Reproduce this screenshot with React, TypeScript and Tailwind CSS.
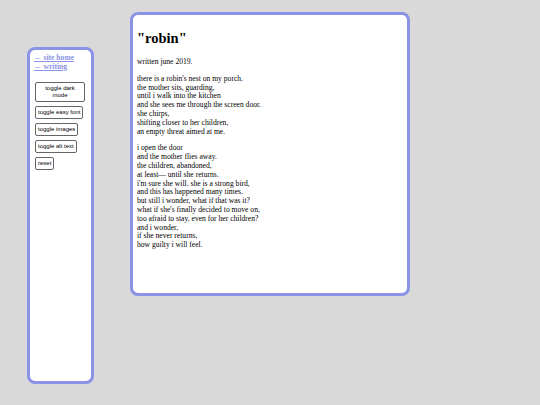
import React from "react";

const stanza1 = [
  "there is a robin's nest on my porch.",
  "the mother sits, guarding,",
  "until i walk into the kitchen",
  "and she sees me through the screen door.",
  "she chirps,",
  "shifting closer to her children,",
  "an empty threat aimed at me.",
];
const stanza2 = [
  "i open the door",
  "and the mother flies away.",
  "the children, abandoned,",
  "at least\u2014 until she returns.",
  "i'm sure she will. she is a strong bird,",
  "and this has happened many times.",
  "but still i wonder, what if that was it?",
  "what if she's finally decided to move on,",
  "too afraid to stay, even for her children?",
  "and i wonder,",
  "if she never returns,",
  "how guilty i will feel.",
];

export default function App() {
  return (
    <div
      className="min-h-[405px] w-[540px] bg-[#d9d9d9] flex items-start pl-[27px]"
      style={{ fontFamily: '"Liberation Serif", serif' }}
    >
      <aside className="mt-[47px] w-[67px] h-[337px] bg-white border-[3px] border-[#8a93e6] rounded-[8px] px-[4px] pt-[3px]">
        <div className="flex flex-col items-start text-[7.6px] leading-[9px] font-bold text-[#8a93e6]">
          <a className="underline">← site home</a>
          <a className="underline">← writing</a>
        </div>
        <div
          className="flex flex-col items-start gap-[4px] mt-[11px] pl-[1px]"
          style={{ fontFamily: '"Liberation Sans", sans-serif' }}
        >
          <button className="w-[50px] h-[20px] border border-[#666] rounded-[2px] bg-white text-[6px] leading-[7px] text-black px-[2px]">
            toggle dark mode
          </button>
          <button className="h-[13px] border border-[#666] rounded-[2px] bg-white text-[6px] leading-[7px] text-black px-[2px]">
            toggle easy font
          </button>
          <button className="h-[13px] border border-[#666] rounded-[2px] bg-white text-[6px] leading-[7px] text-black px-[2px]">
            toggle images
          </button>
          <button className="h-[13px] border border-[#666] rounded-[2px] bg-white text-[6px] leading-[7px] text-black px-[2px]">
            toggle alt text
          </button>
          <button className="h-[13px] border border-[#666] rounded-[2px] bg-white text-[6px] leading-[7px] text-black px-[2px]">
            reset
          </button>
        </div>
      </aside>
      <main className="ml-[36px] mt-[12px] w-[280px] h-[284px] bg-white border-[3px] border-[#8a93e6] rounded-[8px] px-[4px] text-black">
        <h1 className="text-[14.5px] font-bold leading-[18px] mt-[14px]">"robin"</h1>
        <p className="text-[7.6px] leading-[8.8px] mt-[11px]">written june 2019.</p>
        <p className="text-[7.6px] leading-[8.8px] mt-[8px]">
          {stanza1.map((l, i) => (
            <span key={i} className="block">{l}</span>
          ))}
        </p>
        <p className="text-[7.6px] leading-[8.8px] mt-[8px]">
          {stanza2.map((l, i) => (
            <span key={i} className="block">{l}</span>
          ))}
        </p>
      </main>
    </div>
  );
}
